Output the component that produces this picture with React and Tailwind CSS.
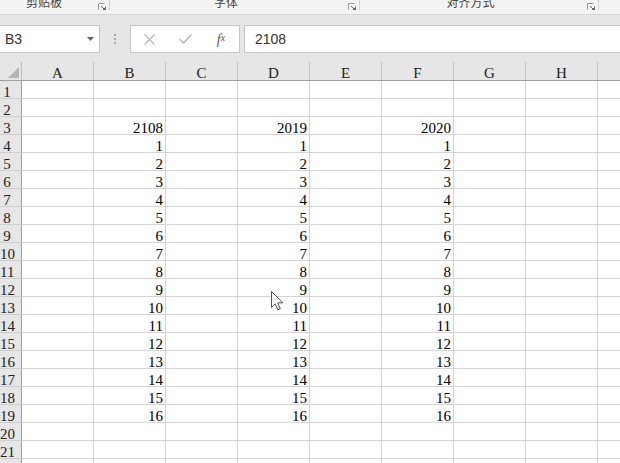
import { useMemo } from 'react';

const COLS = ['A', 'B', 'C', 'D', 'E', 'F', 'G', 'H'];
const ROWS = Array.from({ length: 22 }, (_, i) => i + 1);

const HEAD = {
  B: '2108',
  D: '2019',
  F: '2020',
};

// B, D, F hold the numbers; row 3 is the header row of values
function valueAt(row, col) {
  if (!HEAD[col]) return '';
  if (row === 3) return HEAD[col];
  if (row >= 4 && row <= 19) return String(row - 3);
  return '';
}

function Launcher() {
  return (
    <svg width="8" height="7" viewBox="0 0 8 7" className="mt-[3px] shrink-0">
      <path d="M0.5 6.5V0.5H6.5" stroke="#9a9a9a" fill="none" />
      <path d="M3 3L6 6" stroke="#666" fill="none" />
      <path d="M7.5 3.5V7.5H3.5" stroke="#666" fill="none" />
      <rect x="5" y="5" width="2.5" height="2.5" fill="#666" />
    </svg>
  );
}

function RibbonGroup({ label, width, pad }) {
  return (
    <div className={`flex h-full shrink-0 items-start ${width}`}>
      <div className={`flex flex-1 justify-center ${pad}`}>
        <span className="-mt-[4px] text-[12px] leading-[12px] text-[#444] [font-family:'Noto_Sans_CJK_SC',sans-serif]">
          {label}
        </span>
      </div>
      <Launcher />
      <div className="w-[3px]" />
      <div className="h-[10px] w-px bg-[#d2d2d2]" />
    </div>
  );
}

function FormulaBar() {
  return (
    <div className="flex h-[47px] items-start bg-[#e6e6e6] pt-[10px]">
      {/* Name box */}
      <div className="flex h-[28px] w-[100px] shrink-0 items-center border border-l-0 border-[#c6c6c6] bg-white pl-[5px]">
        <span className="text-[14px] text-[#333] [font-family:'Liberation_Sans',sans-serif]">B3</span>
        <svg width="7" height="4" viewBox="0 0 7 4" className="ml-auto mr-[5px]">
          <path d="M0 0H7L3.5 4Z" fill="#666" />
        </svg>
      </div>

      {/* Splitter dots */}
      <div className="flex h-[28px] w-[30px] shrink-0 flex-col items-center justify-center gap-[2px]">
        <div className="h-[2px] w-[2px] bg-[#a8a8a8]" />
        <div className="h-[2px] w-[2px] bg-[#a8a8a8]" />
        <div className="h-[2px] w-[2px] bg-[#a8a8a8]" />
      </div>

      {/* Cancel / Enter / fx */}
      <div className="flex h-[28px] w-[110px] shrink-0 items-center border border-[#c6c6c6] bg-white">
        <span className="flex w-[36px] justify-center">
          <svg width="11" height="11" viewBox="0 0 11 11">
            <path d="M0.5 0.5L10.5 10.5M10.5 0.5L0.5 10.5" stroke="#b8b8b8" strokeWidth="1.2" />
          </svg>
        </span>
        <span className="flex w-[36px] justify-center">
          <svg width="13" height="10" viewBox="0 0 13 10">
            <path d="M0.5 5L4.5 9L12.5 0.5" stroke="#b8b8b8" strokeWidth="1.5" fill="none" />
          </svg>
        </span>
        <span className="flex w-[36px] justify-center text-[14px] italic text-[#555] [font-family:'Liberation_Serif',serif]">
          f<span className="text-[10px] leading-[18px]">x</span>
        </span>
      </div>

      {/* Formula input */}
      <div className="ml-[4px] flex h-[28px] flex-1 items-center border-y border-l border-[#c6c6c6] bg-white pl-[10px]">
        <span className="text-[14px] text-[#333] [font-family:'Liberation_Sans',sans-serif]">2108</span>
      </div>
    </div>
  );
}

function ColumnHeaders() {
  return (
    <div className="flex h-[19px] border-b border-[#9e9e9e] bg-[#e6e6e6]">
      <div className="flex w-[22px] shrink-0 items-end justify-end border-r border-[#bcbcbc] pb-[2px] pr-[2px]">
        <svg width="11" height="11" viewBox="0 0 11 11">
          <path d="M11 0V11H0Z" fill="#b4b4b4" />
        </svg>
      </div>
      {COLS.map((c) => (
        <div
          key={c}
          className="flex w-[72px] shrink-0 items-end justify-center border-r border-[#c4c4c4] pb-[1px] text-[15px] leading-[12px] text-[#222]"
        >
          {c}
        </div>
      ))}
      <div className="flex-1" />
    </div>
  );
}

function Row({ n }) {
  return (
    <div className="flex h-[18px]">
      <div className="flex w-[22px] shrink-0 items-end border-b border-r border-b-[#cfcfcf] border-r-[#9e9e9e] bg-[#e6e6e6]">
        <span className="w-[14px] text-center text-[15px] leading-[12px] text-[#222]">{n}</span>
      </div>
      {COLS.map((c) => (
        <div
          key={c}
          className="flex w-[72px] shrink-0 items-end justify-end border-b border-r border-[#d4d4d4] bg-white pr-[2px] text-[15px] leading-[12px] text-black"
        >
          {valueAt(n, c)}
        </div>
      ))}
      <div className="flex-1 border-b border-[#d4d4d4] bg-white" />
    </div>
  );
}

function Cursor() {
  return (
    <svg
      width="13"
      height="20"
      viewBox="0 0 13 20"
      className="pointer-events-none absolute left-[271px] top-[291px]"
    >
      <path
        d="M0.5 0.5V16.5L4.3 12.8L6.8 18.8L9.3 17.8L6.8 11.8H12Z"
        fill="#fff"
        stroke="#555"
        strokeLinejoin="round"
      />
    </svg>
  );
}

export default function App() {
  const rows = useMemo(() => ROWS, []);

  return (
    <div className="relative h-[463px] w-[620px] overflow-hidden bg-white [font-family:'Liberation_Serif',serif]">
      {/* Ribbon group captions (cut off by the scroll) */}
      <div className="flex h-[15px] overflow-hidden border-b border-[#d5d5d5] bg-[#f3f3f3]">
        <RibbonGroup label="剪贴板" width="w-[110px]" pad="pr-[10px]" />
        <RibbonGroup label="字体" width="w-[250px]" pad="pr-[6px]" />
        <RibbonGroup label="对齐方式" width="w-[239px]" pad="pr-[6px]" />
      </div>

      <FormulaBar />
      <ColumnHeaders />

      {rows.map((n) => (
        <Row key={n} n={n} />
      ))}

      <Cursor />
    </div>
  );
}
